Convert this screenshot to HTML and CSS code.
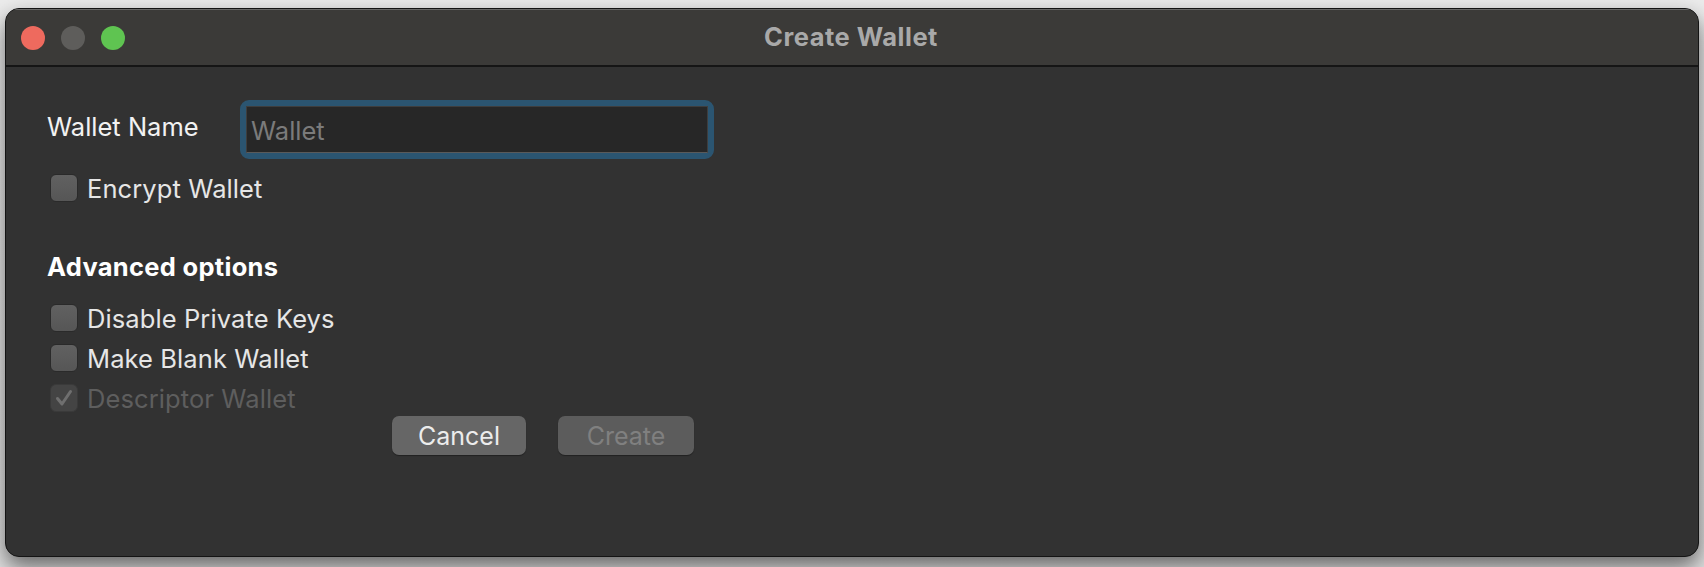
FILE: index.html
```
<!DOCTYPE html>
<html>
<head>
<meta charset="utf-8">
<link rel="stylesheet" href="styles.css">
</head>
<body>
<div class="window">
  <div class="titlebar">
    <div class="lights">
      <span class="light red"></span>
      <span class="light gray"></span>
      <span class="light green"></span>
    </div>
    <div class="title">Create Wallet</div>
    <div class="spacer"></div>
  </div>
  <div class="content">
    <div class="name-row">
      <div class="label">Wallet Name</div>
      <div class="ring"><div class="field">Wallet</div></div>
    </div>
    <div class="check-row first">
      <span class="box"></span><span class="check-text">Encrypt Wallet</span>
    </div>
    <div class="section">Advanced options</div>
    <div class="checks">
      <div class="check-row"><span class="box"></span><span class="check-text">Disable Private Keys</span></div>
      <div class="check-row"><span class="box"></span><span class="check-text">Make Blank Wallet</span></div>
      <div class="check-row disabled">
        <span class="box checked"><svg viewBox="0 0 28 28" width="28" height="28"><path d="M7.5 14.5 L12 20 L20.5 7.5" fill="none" stroke="#6f6f6f" stroke-width="3" stroke-linecap="round" stroke-linejoin="round"/></svg></span><span class="check-text">Descriptor Wallet</span>
      </div>
    </div>
    <div class="buttons">
      <div class="btn">Cancel</div>
      <div class="btn off">Create</div>
    </div>
  </div>
</div>
</body>
</html>
```
FILE: styles.css
```
html, body {
  margin: 0;
  padding: 0;
}
body {
  width: 1704px;
  height: 567px;
  overflow: hidden;
  background: linear-gradient(#ececec, #e2e2e2);
  font-family: Inter, "Noto Sans", sans-serif;
}
.window {
  margin: 8px 0 0 5px;
  width: 1694px;
  height: 549px;
  box-sizing: border-box;
  border: 1px solid #141414;
  border-radius: 14px;
  background: #323232;
  overflow: hidden;
  box-shadow: 0 10px 22px rgba(0, 0, 0, 0.55);
  display: flex;
  flex-direction: column;
}
.titlebar {
  height: 55px;
  flex: none;
  background: #3b3a38;
  border-top: 1px solid #6a6a69;
  border-bottom: 2px solid #151515;
  display: grid;
  grid-template-columns: 1fr auto 1fr;
  align-items: center;
  box-sizing: content-box;
}
.lights {
  display: flex;
  gap: 16px;
  padding-left: 15px;
}
.light {
  width: 24px;
  height: 24px;
  border-radius: 50%;
  display: block;
}
.red { background: #ee6a5e; }
.gray { background: #5e5d5b; }
.green { background: #5fc451; }
.title {
  color: #a9a9a9;
  font-weight: 700;
  font-size: 25.5px;
  letter-spacing: 0.5px;
  padding-bottom: 2px;
  padding-right: 2px;
}
.content {
  flex: 1;
  padding: 0 0 0 41px;
  color: #ececec;
  font-size: 25.5px;
}
.name-row {
  display: flex;
  align-items: center;
  margin-top: 33px;
}
.label {
  width: 193px;
  flex: none;
  color: #f2f2f2;
  font-size: 25.5px;
  padding-bottom: 7px;
}
.ring {
  width: 474px;
  height: 59px;
  box-sizing: border-box;
  border: 6px solid #2b5571;
  border-radius: 9px;
}
.field {
  height: 100%;
  box-sizing: border-box;
  background: #272727;
  border: 1px solid #3e3e3e;
  border-bottom-color: #5a5a5a;
  color: #7b7b7b;
  padding: 2px 0 0 4px;
  display: flex;
  align-items: center;
  font-size: 25.5px;
}
.check-row {
  display: flex;
  align-items: center;
  height: 28px;
  padding-left: 3px;
}
.check-row.first {
  margin-top: 15px;
}
.box {
  width: 28px;
  height: 28px;
  box-sizing: border-box;
  border-radius: 6px;
  background: linear-gradient(#616161, #565656);
  border: 1px solid #2a2a2a;
  flex: none;
  display: block;
}
.box.checked {
  background: #444444;
  border-color: #3a3a3a;
}
.box svg {
  display: block;
  margin: -1px;
}
.check-text {
  margin-left: 9px;
  font-size: 25.5px;
  letter-spacing: 0.1px;
  color: #e6e6e6;
}
.disabled .check-text {
  color: #5e5e5e;
}
.section {
  margin-top: 51px;
  height: 28px;
  line-height: 28px;
  font-weight: 700;
  font-size: 25.5px;
  letter-spacing: 0.3px;
  color: #ffffff;
}
.checks {
  margin-top: 23px;
  display: flex;
  flex-direction: column;
  gap: 12px;
}
.buttons {
  display: flex;
  gap: 32px;
  margin-top: 4px;
  margin-left: 345px;
}
.btn {
  width: 134px;
  height: 39px;
  box-sizing: border-box;
  border-radius: 7px;
  background: #666666;
  color: #ececec;
  font-size: 25px;
  display: flex;
  align-items: center;
  justify-content: center;
  box-shadow: 0 1px 1px rgba(0,0,0,0.35);
}
.btn.off {
  width: 136px;
  background: #5c5c5c;
  color: #808080;
}
```
